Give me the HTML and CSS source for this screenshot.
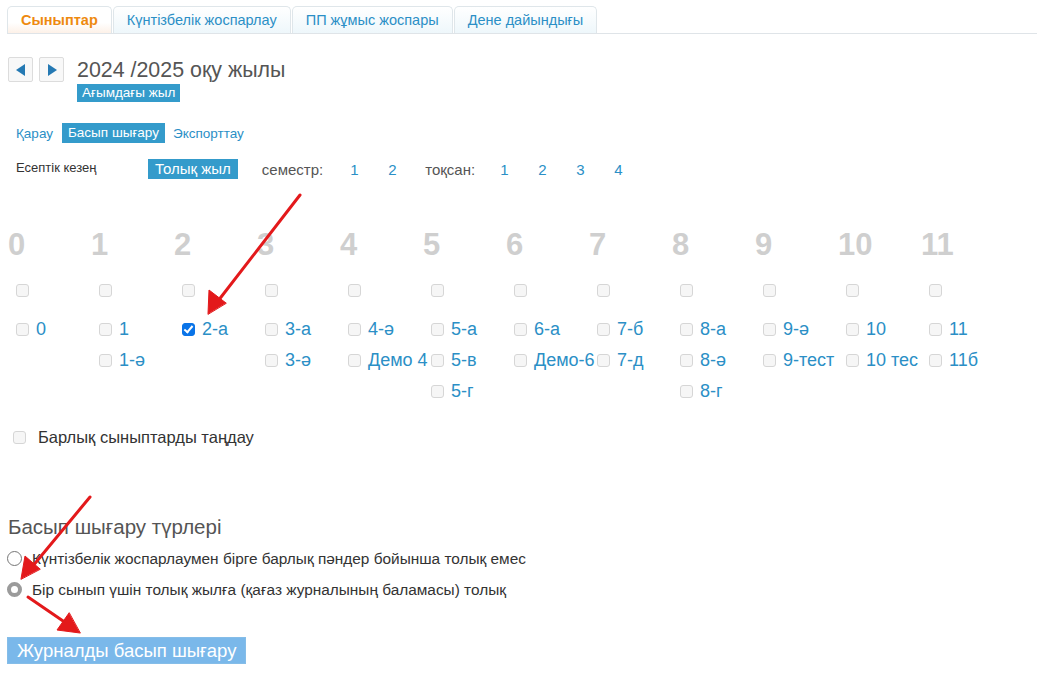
FILE: index.html
```html
<!DOCTYPE html>
<html lang="kk">
<head>
    <meta charset="UTF-8">
    <title>Журналды басып шығару</title>
    <link rel="stylesheet" href="styles.css">
</head>
<body>

<ul class="tabs">
    <li class="tab active">Сыныптар</li>
    <li class="tab">Күнтізбелік жоспарлау</li>
    <li class="tab">ПП жұмыс жоспары</li>
    <li class="tab">Дене дайындығы</li>
</ul>

<div class="year">
    <div class="year-nav">
        <span class="nav-btn"><svg width="10" height="12" viewBox="0 0 10 12"><path d="M9 0 L0 6 L9 12 Z" fill="#2579b3"/></svg></span>
        <span class="nav-btn"><svg width="10" height="12" viewBox="0 0 10 12"><path d="M1 0 L10 6 L1 12 Z" fill="#2579b3"/></svg></span>
    </div>
    <div class="year-info">
        <h2 class="year-title">2024 /2025 оқу жылы</h2>
        <span class="badge">Ағымдағы жыл</span>
    </div>
</div>

<div class="actions">
    <a class="link">Қарау</a>
    <span class="badge badge-lg">Басып шығару</span>
    <a class="link">Экспорттау</a>
</div>

<div class="period">
    <span class="period-label">Есептік кезең</span>
    <span class="badge badge-period">Толық жыл</span>
    <span class="muted">семестр:</span>
    <a class="num">1</a>
    <a class="num">2</a>
    <span class="muted quarter">тоқсан:</span>
    <a class="num">1</a>
    <a class="num">2</a>
    <a class="num">3</a>
    <a class="num">4</a>
</div>

<div class="grades" id="grades"></div>

<label class="select-all">
    <span class="box"></span>
    Барлық сыныптарды таңдау
</label>

<h3 class="print-title">Басып шығару түрлері</h3>
<label class="radio-row"><span class="radio"></span>Күнтізбелік жоспарлаумен бірге барлық пәндер бойынша толық емес</label>
<label class="radio-row"><span class="radio checked"></span>Бір сынып үшін толық жылға (қағаз журналының баламасы) толық</label>

<button class="print-btn">Журналды басып шығару</button>

<svg class="arrows" width="1037" height="675" viewBox="0 0 1037 675">
    <g stroke="#e3191b" stroke-width="3" fill="#e3191b" stroke-linecap="round">
        <line x1="300" y1="195" x2="218" y2="301"/>
        <path d="M208 314 L209 290 L226 303 Z" stroke-width="1"/>
        <line x1="90" y1="497" x2="32" y2="567"/>
        <path d="M21 579 L25 556 L40 569 Z" stroke-width="1"/>
        <line x1="28" y1="597" x2="66" y2="623"/>
        <path d="M80 633 L57 630 L69 613 Z" stroke-width="1"/>
    </g>
</svg>

<script>
    const grades = [
        ["0"],
        ["1", "1-ә"],
        ["2-а"],
        ["3-а", "3-ә"],
        ["4-ә", "Демо 4"],
        ["5-а", "5-в", "5-г"],
        ["6-а", "Демо-6"],
        ["7-б", "7-д"],
        ["8-а", "8-ә", "8-г"],
        ["9-ә", "9-тест"],
        ["10", "10 тес"],
        ["11", "11б"]
    ];

    const container = document.getElementById("grades");
    grades.forEach(function (classes, i) {
        let html = '<div class="grade-col"><div class="grade-num">' + i + '</div>';
        html += '<div class="grade-check"><span class="box"></span></div>';
        classes.forEach(function (name) {
            const checked = name === "2-а" ? " checked" : "";
            html += '<div class="class-item"><span class="box' + checked + '"></span>' + name + '</div>';
        });
        html += '</div>';
        container.innerHTML += html;
    });
</script>

</body>
</html>
```

FILE: styles.css
```css
body {
    font-family: "Liberation Sans", Arial, sans-serif;
    margin: 0;
    padding: 6px 0 0 7px;
    color: #333;
    background: #fff;
    position: relative;
}
.tabs {
    list-style: none;
    margin: 0;
    padding: 0;
    display: flex;
    gap: 1px;
    border-bottom: 1px solid #dfe4e8;
}
.tab {
    height: 26px;
    line-height: 26px;
    padding: 0 13px;
    font-size: 14.5px;
    color: #2b8fc6;
    border: 1px solid #dfe6ea;
    border-bottom: none;
    border-radius: 5px 5px 0 0;
    background: linear-gradient(#ffffff, #eef7fb);
}
.tab.active {
    color: #ee8a10;
    font-weight: bold;
    padding: 0 13px;
    background: linear-gradient(#ffffff 60%, #fdf1e8);
}
.year {
    display: flex;
    margin-top: 23px;
}
.year-nav {
    display: flex;
    gap: 6px;
    padding-left: 1px;
}
.nav-btn {
    width: 23px;
    height: 23px;
    border: 1px solid #dcdcdc;
    border-radius: 2px;
    background: #f8f8f8;
    display: flex;
    align-items: center;
    justify-content: center;
}
.year-info {
    margin-left: 13px;
}
.year-title {
    margin: 0;
    font-size: 21.4px;
    font-weight: normal;
    color: #555;
    line-height: 26px;
}
.badge {
    display: inline-block;
    background: #349bcb;
    color: #fff;
    font-size: 13.5px;
    line-height: 18px;
    padding: 0 5px;
    margin-top: 1px;
    vertical-align: top;
}
.actions {
    display: flex;
    align-items: center;
    margin: 21px 0 0 9px;
    font-size: 13.5px;
}
.link {
    color: #2b8fc6;
}
.badge-lg {
    line-height: 20px;
    padding: 0 6px;
    margin: 0 8px 0 9px;
}
.period {
    display: flex;
    align-items: center;
    margin: 16px 0 0 9px;
    font-size: 15px;
}
.period-label {
    width: 132px;
    font-size: 13px;
    color: #333;
    align-self: flex-start;
    padding-top: 1px;
}
.badge-period {
    font-size: 15px;
    line-height: 20px;
    padding: 0 7px;
    margin: 0 24px 0 0;
}
.muted {
    color: #555;
}
.num {
    color: #2b8fc6;
    margin-left: 27px;
    width: 11px;
}
.quarter {
    margin-left: 26px;
    margin-right: -2px;
}
.grades {
    display: grid;
    grid-template-columns: repeat(12, 83px);
    margin-top: 49px;
    margin-left: 1px;
}
.grade-num {
    font-size: 31px;
    font-weight: bold;
    color: #cfcfcf;
    line-height: 34px;
    height: 34px;
}
.grade-check {
    height: 22px;
    padding-top: 21px;
    padding-left: 8px;
}
.class-item {
    display: flex;
    align-items: center;
    height: 31px;
    font-size: 18px;
    color: #2b8fc6;
    padding-left: 8px;
    white-space: nowrap;
}
.class-item .box {
    margin-right: 7px;
}
.grade-check + .class-item {
    margin-top: 9px;
}
.box {
    display: inline-block;
    box-sizing: border-box;
    width: 13px;
    height: 13px;
    border: 1px solid #d6d6d6;
    border-radius: 3px;
    background: #f6f6f6;
    flex: none;
}
.box.checked {
    background: #0a74e8;
    border-color: #0a74e8;
    position: relative;
}
.box.checked::after {
    content: "";
    position: absolute;
    left: 3px;
    top: 0px;
    width: 3px;
    height: 7px;
    border: solid #fff;
    border-width: 0 2px 2px 0;
    transform: rotate(40deg);
}
.select-all {
    display: flex;
    align-items: center;
    margin: 21px 0 0 6px;
    font-size: 16.5px;
    color: #333;
}
.select-all .box {
    margin-right: 12px;
}
.print-title {
    margin: 68px 0 0 1px;
    font-size: 20.5px;
    font-weight: normal;
    color: #555;
}
.radio-row {
    display: flex;
    align-items: center;
    font-size: 15.4px;
    color: #333;
    margin-top: 9px;
    height: 21px;
}
.radio-row + .radio-row {
    margin-top: 10px;
}
.radio {
    box-sizing: border-box;
    width: 15px;
    height: 15px;
    border: 1px solid #767676;
    border-radius: 50%;
    margin: 0 10px 0 0;
    background: #fff;
    flex: none;
}
.radio.checked {
    border: 4px solid #9b9b9b;
    background: #fff;
}
.print-btn {
    display: block;
    margin-top: 37px;
    font-family: "Liberation Sans", Arial, sans-serif;
    font-size: 18.5px;
    color: #fff;
    background: #7ab8ea;
    border: 1px solid #85bde8;
    height: 27px;
    padding: 0 9px;
    line-height: 25px;
}
.arrows {
    position: absolute;
    left: 0;
    top: 0;
    pointer-events: none;
}
```
